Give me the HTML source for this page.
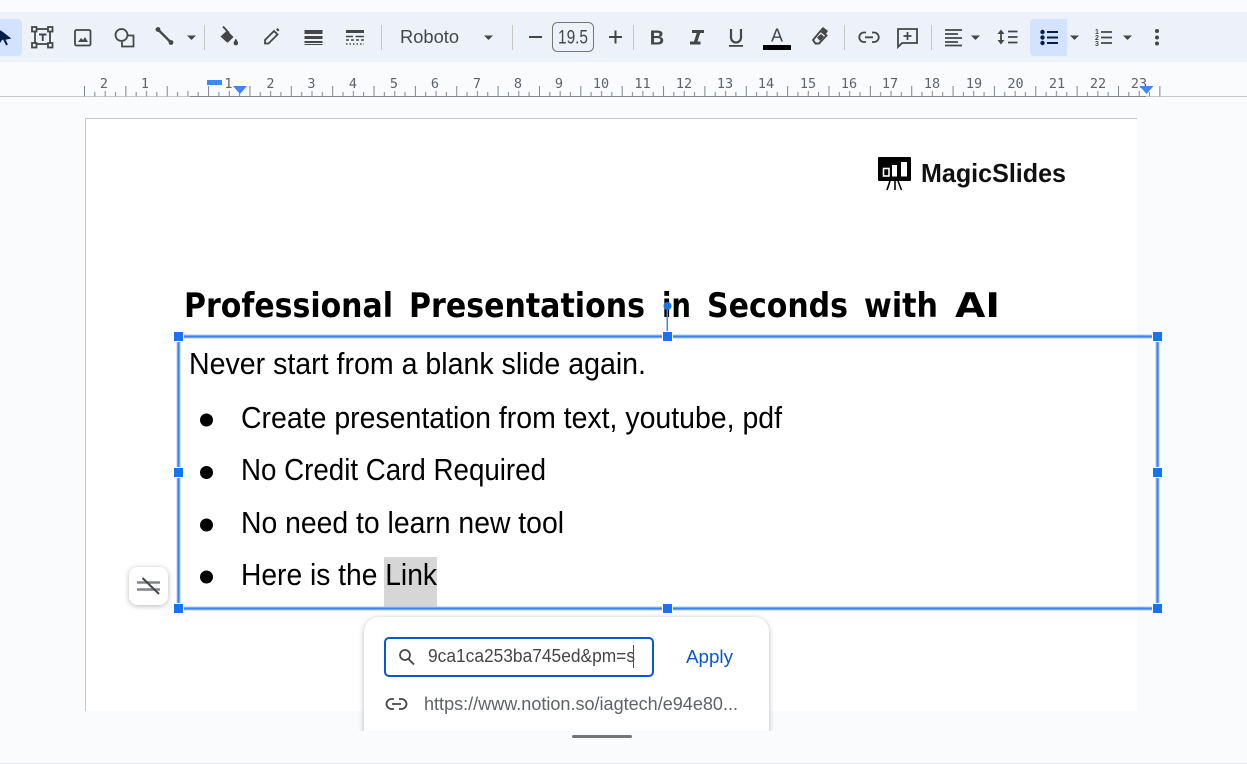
<!DOCTYPE html>
<html><head><meta charset="utf-8"><style>
html,body{margin:0;padding:0;background:#f9fbfd;width:1247px;height:764px;overflow:hidden}
svg{display:block;font-family:"Liberation Sans",sans-serif}
.r{font-family:"DejaVu Sans Mono","Liberation Mono",monospace;font-size:13.5px;fill:#5f6368;text-anchor:middle}
.t{font-size:30.5px;fill:#000}
.h{font-family:"DejaVu Sans",sans-serif;font-size:34px;font-weight:bold;fill:#000}
.s{stroke:#444746;fill:none}
.f{fill:#444746}
</style></head><body>
<svg width="1247" height="764" viewBox="0 0 1247 764" xmlns="http://www.w3.org/2000/svg">
<defs>
<pattern id="tk" x="84" y="86" width="41.36" height="10.5" patternUnits="userSpaceOnUse">
<rect x="0" y="0" width="1" height="10.5" fill="#80868b"/>
<rect x="10.3" y="6" width="1" height="4.5" fill="#80868b"/>
<rect x="20.7" y="5" width="1" height="5.5" fill="#80868b"/>
<rect x="31" y="6" width="1" height="4.5" fill="#80868b"/>
</pattern>
<filter id="sh" x="-20%" y="-20%" width="140%" height="140%"><feDropShadow dx="0" dy="1" stdDeviation="3" flood-color="#000" flood-opacity=".28"/></filter>
</defs>
<rect width="1247" height="764" fill="#f9fbfd"/>

<!-- toolbar -->
<rect x="0" y="12" width="1247" height="50" fill="#edf2fa"/>
<path d="M0 19H18a4 4 0 0 1 4 4V52a4 4 0 0 1-4 4H0Z" fill="#d3e3fd"/>
<path d="M1030 23a4 4 0 0 1 4-4H1067V56H1034a4 4 0 0 1-4-4Z" fill="#d3e3fd"/>
<!-- cursor -->
<path d="M0 31L9 38L4 39L7 45" fill="none" stroke="#041e49" stroke-width="2"/><path d="M0 31L9 38L2 40L0 43Z" fill="#041e49"/>
<!-- text box -->
<g class="s" stroke-width="1.8"><rect x="35" y="29" width="15" height="15"/><rect x="32" y="27" width="4.5" height="4.5" fill="#edf2fa"/><rect x="48" y="27" width="4.5" height="4.5" fill="#edf2fa"/><rect x="32" y="43" width="4.5" height="4.5" fill="#edf2fa"/><rect x="48" y="43" width="4.5" height="4.5" fill="#edf2fa"/></g>
<path d="M39 33.500H46.500V35.500H43.700V41H41.800V35.500H39Z" class="f"/>
<!-- image -->
<rect x="75" y="30" width="15.5" height="15.5" rx="1.5" class="s" stroke-width="1.8"/><path d="M78 42L81 38L83 40L85 37L88 42Z" class="f"/>
<!-- shape -->
<circle cx="121.500" cy="35" r="6" class="s" stroke-width="1.8"/><path d="M128 35.500H133.500V46.500H122V42" class="s" stroke-width="1.8"/>
<!-- line -->
<path d="M158 29.500L171 42.500" class="s" stroke-width="2.400"/><circle cx="158" cy="29.500" r="2.400" class="f"/><circle cx="171" cy="42.500" r="2.400" class="f"/>
<path d="M187 35.500H196L191.500 40Z" class="f"/>
<!-- separators -->
<g fill="#c7c7c7"><rect x="204" y="25" width="1" height="25"/><rect x="381" y="25" width="1" height="25"/><rect x="512" y="25" width="1" height="25"/><rect x="633" y="25" width="1" height="25"/><rect x="844" y="25" width="1" height="25"/><rect x="931" y="25" width="1" height="25"/></g>
<!-- bucket -->
<path d="M220.500 36.500L227 30.500L233.500 37L228 42.500H227Z" class="f"/><path d="M223 26.500L229 33" class="s" stroke-width="1.800"/><path d="M235.800 38.500C237.500 41 238 42 238 43.200A2.200 2.200 0 0 1 233.600 43.200C233.600 42 234.500 41 235.800 38.500Z" class="f"/>
<!-- pencil -->
<path d="M265 43.500V40L274 31L277.500 34.500L268.500 43.500Z" class="s" stroke-width="1.800"/><path d="M276 29.500L277.500 28L279.500 30L278 31.500Z" class="f"/>
<!-- line weight -->
<rect x="304.500" y="30" width="18" height="4" class="f"/><rect x="304.500" y="36" width="18" height="3" class="f"/><rect x="304.500" y="41" width="18" height="2" class="f"/><rect x="304.500" y="44" width="18" height="1" class="f"/>
<!-- dash -->
<rect x="346" y="30" width="18" height="3" class="f"/><path d="M346 36.500H353M355.500 36.500H364M346 40H349M351 40H354M356 40H359M361 40H364" class="s" stroke-width="1.500"/><path d="M346 44H364" class="s" stroke-width="1.500" stroke-dasharray="1.500 2"/>
<!-- font -->
<text x="400" y="43" font-size="18" fill="#444746" textLength="59" lengthAdjust="spacingAndGlyphs">Roboto</text>
<path d="M484 35.500H493L488.500 40Z" class="f"/>
<rect x="529" y="36" width="13" height="2" class="f"/>
<rect x="552.500" y="22.500" width="41" height="29" rx="5" fill="none" stroke="#747775"/>
<text x="558" y="43.500" font-size="19" fill="#444746" textLength="30" lengthAdjust="spacingAndGlyphs">19.5</text>
<rect x="609" y="36" width="13" height="2" class="f"/><rect x="614.500" y="30.500" width="2" height="13" class="f"/>
<text x="657" y="44.500" font-size="20" font-weight="bold" fill="#444746" text-anchor="middle">B</text>
<path d="M692 30H704V33H700.200L697.500 41.500H700.500V44.500H690V41.500H694L696.700 33H692Z" class="f"/>
<path d="M731 29V37.500A5 5 0 0 0 741 37.500V29" class="s" stroke-width="2.200"/><rect x="729" y="45" width="14" height="1.800" class="f"/>
<text x="777" y="41.500" font-size="18" fill="#444746" text-anchor="middle">A</text>
<rect x="763" y="45" width="28" height="5" fill="#000"/>
<path d="M813 40L820.500 31L826.500 35.500L819 43.500H815.500Z" fill="none" stroke="#444746" stroke-width="1.900"/><path d="M820.500 29.500L823 27L828 31L825.500 34.500Z" class="f"/><path d="M817 37.500L821 34L824 36.500L820 41Z" class="f"/>
<!-- link -->
<path d="M866 32.500H864A4.500 4.500 0 0 0 864 42H866M872 32.500H874A4.500 4.500 0 0 1 874 42H872M865 37.300H873" class="s" stroke-width="1.800"/>
<!-- comment -->
<path d="M898 29H917V43H902L898 47Z" class="s" stroke-width="1.800"/><path d="M907.500 32V40M903.500 36H911.500" class="s" stroke-width="1.800"/>
<!-- align -->
<path d="M945 30H962M945 34H958M945 38H962M945 42H958M945 45.500H962" class="s" stroke-width="1.700"/>
<path d="M971 35.500H980L975.500 40Z" class="f"/>
<!-- line spacing -->
<path d="M1001 32V42" class="s" stroke-width="1.800"/><path d="M997.500 34L1001 29.500L1004.500 34ZM997.500 40L1001 44.500L1004.500 40Z" class="f"/><path d="M1008 31.500H1017.500M1008 37H1017.500M1008 42.500H1017.500" class="s" stroke-width="1.800"/>
<!-- bullets -->
<g fill="#041e49"><circle cx="1042.500" cy="32" r="2.200"/><circle cx="1042.500" cy="37.500" r="2.200"/><circle cx="1042.500" cy="43" r="2.200"/></g>
<path d="M1047 32H1058M1047 37.500H1058M1047 43H1058" fill="none" stroke="#041e49" stroke-width="2"/>
<path d="M1070 35.500H1079L1074.500 40Z" class="f"/>
<!-- numbers -->
<text x="1097" y="34" font-size="7" font-weight="bold" fill="#444746" text-anchor="middle">1</text><text x="1097" y="40" font-size="7" font-weight="bold" fill="#444746" text-anchor="middle">2</text><text x="1097" y="46" font-size="7" font-weight="bold" fill="#444746" text-anchor="middle">3</text>
<path d="M1101 32H1112M1101 37.500H1112M1101 43H1112" class="s" stroke-width="1.800"/>
<path d="M1123 35.500H1132L1127.500 40Z" class="f"/>
<circle cx="1157" cy="31" r="2" class="f"/><circle cx="1157" cy="37.500" r="2" class="f"/><circle cx="1157" cy="43.500" r="2" class="f"/>

<!-- ruler -->
<rect x="0" y="96" width="1247" height="1" fill="#c7c7c7"/>
<rect x="190" y="96" width="956" height="1" fill="#80868b"/>
<rect x="84" y="86" width="1077" height="10.500" fill="url(#tk)"/>
<g class="r">
<text x="104" y="88">2</text><text x="145" y="88">1</text><text x="228.500" y="88">1</text><text x="270.500" y="88">2</text><text x="311.500" y="88">3</text><text x="353" y="88">4</text><text x="394" y="88">5</text><text x="435" y="88">6</text><text x="477" y="88">7</text><text x="518" y="88">8</text><text x="559" y="88">9</text><text x="601" y="88">10</text><text x="642.500" y="88">11</text><text x="684" y="88">12</text><text x="725" y="88">13</text><text x="766" y="88">14</text><text x="808" y="88">15</text><text x="849" y="88">16</text><text x="890" y="88">17</text><text x="932" y="88">18</text><text x="974" y="88">19</text><text x="1015.500" y="88">20</text><text x="1057" y="88">21</text><text x="1098" y="88">22</text><text x="1139" y="88">23</text>
</g>
<rect x="207" y="80" width="15" height="5" fill="#4285f4"/>
<path d="M233 86H247L240 94Z" fill="#4285f4"/>
<path d="M1139.500 86H1153.500L1146.500 94Z" fill="#4285f4"/>

<!-- slide -->
<rect x="85" y="118" width="1052" height="593" fill="#fff"/>
<rect x="85" y="118" width="1052" height="1" fill="#c7c7c7"/>
<rect x="85" y="118" width="1" height="593" fill="#c7c7c7"/>

<!-- logo -->
<rect x="878" y="157" width="33" height="24" rx="1" fill="#000"/>
<rect x="883.500" y="168.500" width="5.500" height="7.500" fill="none" stroke="#fff" stroke-width="1.600"/><rect x="892" y="165" width="5" height="11.500" fill="#fff"/><rect x="901" y="162" width="6" height="14.500" fill="#fff"/>
<path d="M890 181L887 190M895 181V190M898 181L901.500 190" stroke="#000" stroke-width="1.600" fill="none"/>
<text x="921" y="182" font-size="26" font-weight="bold" fill="#111" textLength="145" lengthAdjust="spacingAndGlyphs">MagicSlides</text>

<!-- title -->
<text class="h" x="184" y="317" textLength="209" lengthAdjust="spacingAndGlyphs">Professional</text>
<text class="h" x="409" y="317" textLength="236" lengthAdjust="spacingAndGlyphs">Presentations</text>
<text class="h" x="662" y="317" textLength="29" lengthAdjust="spacingAndGlyphs">in</text>
<text class="h" x="707" y="317" textLength="141" lengthAdjust="spacingAndGlyphs">Seconds</text>
<text class="h" x="864" y="317" textLength="74" lengthAdjust="spacingAndGlyphs">with</text>
<text class="h" x="955" y="317" textLength="45" lengthAdjust="spacingAndGlyphs">AI</text>

<!-- body -->
<rect x="384" y="557" width="53" height="51" fill="#d6d6d6"/>
<text class="t" x="189" y="374" textLength="457" lengthAdjust="spacingAndGlyphs">Never start from a blank slide again.</text>
<text class="t" x="241" y="428" textLength="541" lengthAdjust="spacingAndGlyphs">Create presentation from text, youtube, pdf</text>
<text class="t" x="241" y="480" textLength="305" lengthAdjust="spacingAndGlyphs">No Credit Card Required</text>
<text class="t" x="241" y="533" textLength="323" lengthAdjust="spacingAndGlyphs">No need to learn new tool</text>
<text class="t" x="241" y="585" textLength="196" lengthAdjust="spacingAndGlyphs">Here is the Link</text>
<g fill="#000"><circle cx="206.500" cy="420" r="6.500"/><circle cx="206.500" cy="472.500" r="6.500"/><circle cx="206.500" cy="525" r="6.500"/><circle cx="206.500" cy="577" r="6.500"/></g>

<!-- selection -->
<rect x="178.500" y="336.500" width="979" height="272" fill="none" stroke="#a9c8f8" stroke-width="4"/>
<rect x="178.500" y="336.500" width="979" height="272" fill="none" stroke="#3c82ee" stroke-width="2"/>
<rect x="666.500" y="306" width="1.500" height="30" fill="#4285f4"/>
<circle cx="667.500" cy="306" r="4" fill="#1a73e8"/>
<g fill="#1a73e8" stroke="#fff" stroke-width="1">
<rect x="173.500" y="331.500" width="10" height="10"/><rect x="662.500" y="331.500" width="10" height="10"/><rect x="1152.500" y="331.500" width="10" height="10"/>
<rect x="173.500" y="467.500" width="10" height="10"/><rect x="1152.500" y="467.500" width="10" height="10"/>
<rect x="173.500" y="603.500" width="10" height="10"/><rect x="662.500" y="603.500" width="10" height="10"/><rect x="1152.500" y="603.500" width="10" height="10"/>
</g>

<!-- autofit button -->
<rect x="129" y="567" width="39" height="38" rx="9" fill="#fff" filter="url(#sh)"/>
<path d="M137 582.500H160M137 589.500H160" stroke="#80868b" stroke-width="2.400" fill="none"/>
<path d="M142.500 578L159 594" stroke="#444746" stroke-width="2" fill="none"/>

<!-- popup -->
<g filter="url(#sh)"><path d="M364 632a15 15 0 0 1 15-15H754a15 15 0 0 1 15 15V760H364Z" fill="#fff"/></g>
<rect x="385" y="638" width="268" height="38" rx="4" fill="#fff" stroke="#0b57d0" stroke-width="2"/>
<circle cx="405" cy="655" r="5" fill="none" stroke="#444746" stroke-width="1.700"/><path d="M408.500 659L414 664.500" stroke="#444746" stroke-width="1.900" fill="none"/>
<text x="428" y="662" font-size="18.500" fill="#444746" textLength="207" lengthAdjust="spacingAndGlyphs">9ca1ca253ba745ed&amp;pm=s</text>
<rect x="633" y="645" width="1" height="23" fill="#0b57d0"/>
<text x="686" y="663" font-size="18.500" fill="#0b57d0" textLength="47" lengthAdjust="spacingAndGlyphs">Apply</text>
<path d="M394 699H391.500A4.500 4.500 0 0 0 391.500 709H394M399 699H401.500A4.500 4.500 0 0 1 401.500 709H399M392 704H401" fill="none" stroke="#444746" stroke-width="1.800"/>
<text x="424" y="710" font-size="18.500" fill="#5f6368" textLength="314" lengthAdjust="spacingAndGlyphs">https://www.notion.so/iagtech/e94e80...</text>

<!-- bottom -->
<rect x="0" y="731" width="1247" height="33" fill="#f9fbfd"/>
<rect x="572" y="735" width="60" height="3" rx="1.500" fill="#757575"/>
<rect x="0" y="763" width="1247" height="1" fill="#e8eaed"/>
</svg>
</body></html>
